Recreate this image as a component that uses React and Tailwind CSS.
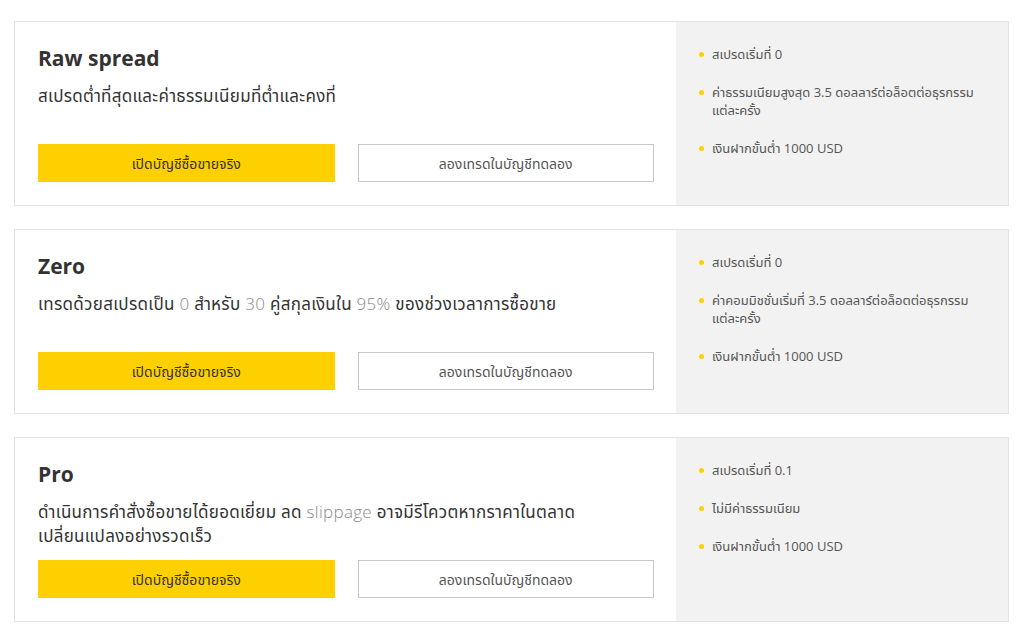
const plans = [
  {
    title: "Raw spread",
    desc: [{ t: "สเปรดต่ำที่สุดและค่าธรรมเนียมที่ต่ำและคงที่" }],
    points: [
      "สเปรดเริ่มที่ 0",
      "ค่าธรรมเนียมสูงสุด 3.5 ดอลลาร์ต่อล็อตต่อธุรกรรมแต่ละครั้ง",
      "เงินฝากขั้นต่ำ 1000 USD",
    ],
  },
  {
    title: "Zero",
    desc: [
      { t: "เทรดด้วยสเปรดเป็น " },
      { t: "0", light: true },
      { t: " สำหรับ " },
      { t: "30", light: true },
      { t: " คู่สกุลเงินใน " },
      { t: "95%", light: true },
      { t: " ของช่วงเวลาการซื้อขาย" },
    ],
    points: [
      "สเปรดเริ่มที่ 0",
      "ค่าคอมมิชชั่นเริ่มที่ 3.5 ดอลลาร์ต่อล็อตต่อธุรกรรมแต่ละครั้ง",
      "เงินฝากขั้นต่ำ 1000 USD",
    ],
  },
  {
    title: "Pro",
    desc: [
      { t: "ดำเนินการคำสั่งซื้อขายได้ยอดเยี่ยม ลด " },
      { t: "slippage", light: true },
      { t: " อาจมีรีโควตหากราคาในตลาด" },
      { br: true },
      { t: "เปลี่ยนแปลงอย่างรวดเร็ว" },
    ],
    points: ["สเปรดเริ่มที่ 0.1", "ไม่มีค่าธรรมเนียม", "เงินฝากขั้นต่ำ 1000 USD"],
  },
];

function PlanCard({ plan }) {
  return (
    <div className="flex border border-[#e3e3e3] bg-white">
      <div className="flex-1 pl-[23px] pr-[22px] pt-[22px] pb-[23px]">
        <h2 className="text-[21px] font-bold leading-[28px] text-[#333]">{plan.title}</h2>
        <p className="mt-3 min-h-[48px] text-[17px] leading-[24px] tracking-[0.3px] text-[#333]">
          {plan.desc.map((d, i) =>
            d.br ? (
              <br key={i} />
            ) : d.light ? (
              <span key={i} className="font-light text-[#8a8a8a]">
                {d.t}
              </span>
            ) : (
              <span key={i}>{d.t}</span>
            )
          )}
        </p>
        <div className="mt-3 grid grid-cols-2 gap-[23px]">
          <button className="h-[38px] bg-[#ffd000] text-[14px] text-[#333]">เปิดบัญชีซื้อขายจริง</button>
          <button className="h-[38px] border border-[#c8c8c8] bg-white text-[14px] text-[#555]">
            ลองเทรดในบัญชีทดลอง
          </button>
        </div>
      </div>
      <div className="w-[332px] bg-[#f2f2f2] pl-[23px] pr-[28px] pt-[23px]">
        <ul className="flex flex-col gap-5">
          {plan.points.map((p, i) => (
            <li key={i} className="flex text-[13px] leading-[18px] text-[#555]">
              <span className="mr-[8px] mt-[7px] h-[5px] w-[5px] shrink-0 rounded-full bg-[#ffd000]"></span>
              <span>{p}</span>
            </li>
          ))}
        </ul>
      </div>
    </div>
  );
}

export default function App() {
  return (
    <div
      className="min-h-screen bg-white px-[14px] pt-[21px] pb-[13px]"
      style={{ fontFamily: '"Open Sans", "Noto Sans", "Noto Sans Thai", Tahoma, sans-serif' }}
    >
      <div className="flex w-[995px] flex-col gap-[23px]">
        {plans.map((p) => (
          <PlanCard key={p.title} plan={p} />
        ))}
      </div>
    </div>
  );
}
